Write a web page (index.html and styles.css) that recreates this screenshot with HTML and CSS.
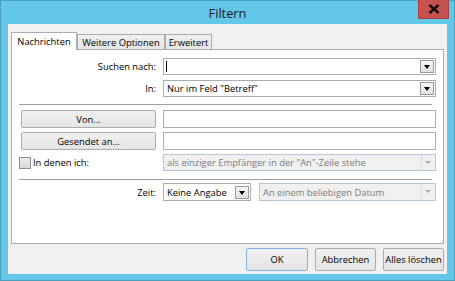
FILE: index.html
```html
<!DOCTYPE html>
<html lang="de">
<head>
    <meta charset="UTF-8">
    <title>Filtern</title>
    <link rel="stylesheet" href="styles.css">
</head>
<body>
    <div class="window">
        <div class="titlebar">
            <span class="title">Filtern</span>
            <span class="close">
                <svg width="12" height="10" viewBox="0 0 12 10">
                    <path d="M1.5 1 L10.5 9 M10.5 1 L1.5 9" stroke="#111" stroke-width="2.5" fill="none"/>
                </svg>
            </span>
        </div>
        <div class="client">
            <div class="tabs">
                <div class="tab active">Nachrichten</div>
                <div class="tab t-weitere">Weitere Optionen</div>
                <div class="tab t-erweitert">Erweitert</div>
            </div>
            <div class="panel">
                <div class="row">
                    <label class="lbl">Suchen nach:</label>
                    <div class="combo"><span class="caret"></span><span class="value"></span><span class="arrow"></span></div>
                </div>
                <div class="row row-in">
                    <label class="lbl">In:</label>
                    <div class="combo"><span class="value">Nur im Feld "Betreff"</span><span class="arrow"></span></div>
                </div>
                <div class="sep"></div>
                <div class="row row-btn">
                    <button class="btn pick">Von...</button>
                    <div class="field"></div>
                </div>
                <div class="row row-btn row-gesendet">
                    <button class="btn pick">Gesendet an...</button>
                    <div class="field"></div>
                </div>
                <div class="row row-check">
                    <label class="check"><span class="box"></span>In denen ich:</label>
                    <div class="combo disabled"><span class="value">als einziger Empfänger in der "An"-Zeile stehe</span><span class="arrow"></span></div>
                </div>
                <div class="sep sep-2"></div>
                <div class="row row-zeit">
                    <label class="lbl">Zeit:</label>
                    <div class="zeit">
                        <div class="combo small"><span class="value">Keine Angabe</span><span class="arrow"></span></div>
                        <div class="combo disabled wide"><span class="value">An einem beliebigen Datum</span><span class="arrow"></span></div>
                    </div>
                </div>
            </div>
            <div class="actions">
                <button class="btn default">OK</button>
                <button class="btn">Abbrechen</button>
                <button class="btn">Alles löschen</button>
            </div>
        </div>
    </div>
</body>
</html>
```

FILE: styles.css
```css
body {
    margin: 0;
    font-family: "Open Sans", "Liberation Sans", sans-serif;
    font-size: 9.4px;
    color: #000;
}
.window {
    box-sizing: border-box;
    width: 455px;
    height: 281px;
    padding: 0 7px 6px;
    background: #62c7e8;
    border: 1px solid #4a9fbf;
    display: flex;
    flex-direction: column;
}
.titlebar {
    position: relative;
    height: 23px;
    margin: 0 -7px;
    display: flex;
    align-items: center;
    justify-content: center;
}
.title {
    font-size: 12.8px;
    color: #1a1a1a;
    margin-top: 1px;
}
.close {
    position: absolute;
    top: -1px;
    right: 5px;
    width: 31px;
    height: 19px;
    background: #c75050;
    border: 1px solid #a8403f;
    border-top: none;
    box-sizing: border-box;
    display: flex;
    align-items: center;
    justify-content: center;
}
.client {
    height: 250px;
    box-sizing: border-box;
    background: #f0f0f0;
    padding: 8px 3px 0;
}
.tabs {
    display: flex;
    align-items: flex-end;
    height: 17px;
}
.tab {
    box-sizing: border-box;
    height: 15px;
    border: 1px solid #acacac;
    border-bottom: none;
    background: linear-gradient(#f0f0f0, #e5e5e5);
    display: flex;
    align-items: center;
    justify-content: center;
    padding-top: 1px;
}
.tab.active {
    width: 66px;
    height: 18px;
    margin-bottom: -1px;
    background: #fff;
    position: relative;
    z-index: 1;
    padding-top: 0;
    padding-bottom: 1px;
}
.t-weitere {
    width: 88px;
}
.t-erweitert {
    width: 47px;
}
.panel {
    box-sizing: border-box;
    height: 195px;
    background: #fff;
    border: 1px solid #acacac;
    padding: 8px 7px 0;
}
.row {
    display: grid;
    grid-template-columns: 137px 1fr;
    column-gap: 7px;
    align-items: center;
    height: 17px;
}
.row-in {
    margin-top: 5px;
}
.row-btn {
    height: 18px;
    margin-top: 5px;
}
.row-gesendet {
    margin-top: 4px;
}
.row-check {
    margin-top: 4px;
}
.row-zeit {
    height: 18px;
    margin-top: 3px;
}
.lbl {
    text-align: right;
}
.sep {
    border-top: 1px solid #a0a0a0;
    margin: 7px 4px 0 0;
}
.sep-2 {
    margin-top: 8px;
}
.combo, .field {
    box-sizing: border-box;
    height: 100%;
    border: 1px solid #abadb3;
    background: #fff;
    display: flex;
    align-items: center;
}
.value {
    flex: 1;
    padding-left: 3px;
    white-space: nowrap;
    overflow: hidden;
}
.caret {
    width: 1px;
    height: 11px;
    margin-left: 2px;
    background: #000;
}
.arrow {
    box-sizing: border-box;
    width: 14px;
    height: 13px;
    margin-right: 1px;
    border: 1px solid #9a9a9a;
    background: linear-gradient(#f8f8f8, #e0e0e0);
    position: relative;
}
.arrow::after {
    content: "";
    position: absolute;
    left: 3px;
    top: 4px;
    border-left: 3.5px solid transparent;
    border-right: 3.5px solid transparent;
    border-top: 4px solid #000;
}
.combo.disabled {
    background: #f0f0f0;
    border-color: #b3c6da;
    color: #7d7d7d;
}
.combo.disabled .arrow {
    width: 14px;
    height: 100%;
    margin-right: 0;
    border: none;
    border-left: 1px solid #d5dde6;
    background: #f0f0f0;
}
.combo.disabled .arrow::after {
    left: 3px;
    top: 6px;
    border-left-width: 3px;
    border-right-width: 3px;
    border-top: 3px solid #a8a8a8;
}
.btn {
    box-sizing: border-box;
    font: inherit;
    color: #000;
    padding: 0;
    border: 1px solid #acacac;
    border-radius: 2px;
    background: linear-gradient(#f0f0f0, #e5e5e5);
}
.pick {
    height: 18px;
    width: 135px;
    margin-left: 2px;
}
.check {
    display: flex;
    align-items: center;
}
.box {
    box-sizing: border-box;
    width: 12px;
    height: 12px;
    margin-right: 2px;
    border: 1px solid #8e8f8f;
    background: linear-gradient(#ececec, #d8d8d8);
}
.zeit {
    display: flex;
    gap: 8px;
    height: 100%;
}
.combo.small {
    width: 88px;
}
.combo.wide {
    flex: 1;
}
.actions {
    display: flex;
    justify-content: flex-end;
    gap: 7px;
    margin-top: 4px;
}
.actions .btn {
    width: 61px;
    height: 23px;
}
.actions .btn.default {
    width: 62px;
    border-color: #7eb4ea;
}
```
